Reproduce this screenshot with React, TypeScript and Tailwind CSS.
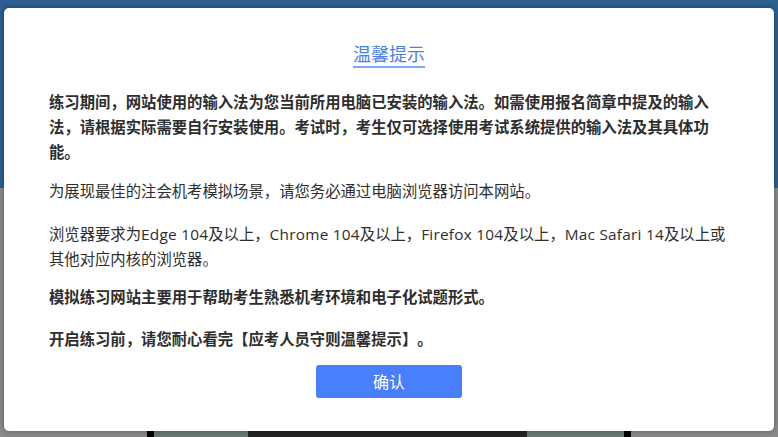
import React from "react";

const font = {
  fontFamily: '"Open Sans", "Noto Sans CJK SC", sans-serif',
};

function Latin({ children }: { children: React.ReactNode }) {
  return <span className="tracking-[0.25px]">{children}</span>;
}

export default function App() {
  return (
    <div className="relative h-[437px] w-[778px] overflow-hidden bg-[#898989]" style={font}>
      {/* page behind the overlay */}
      <div className="flex h-full flex-col">
        <div className="h-[188px] bg-[#2c5e92]" />
        <div className="flex-1 bg-[#898989]" />
        <div className="flex h-[6px] pl-[147px]">
          <div className="w-[7px] bg-black" />
          <div className="w-[94px] bg-[#6a7876]" />
          <div className="w-[279px] bg-[#252525]" />
          <div className="w-[97px] bg-[#6a7876]" />
          <div className="w-[7px] bg-black" />
        </div>
      </div>

      {/* dialog */}
      <div className="absolute left-[4px] top-[8px] flex h-[423px] w-[770px] flex-col items-center rounded-[5px] bg-white pt-[34px] shadow-[0_0_5px_rgba(0,0,0,0.35)] [text-spacing-trim:space-all]">
        <h2 className="border-b-2 border-[#7ea8f6] text-[18px] leading-[24px] text-[#4a7fe6]">
          温馨提示
        </h2>

        <div className="mt-[22px] w-[680px] text-[15.35px] leading-[25px] text-[#2e2e2e]">
          <p className="font-bold">
            练习期间，网站使用的输入法为您当前所用电脑已安装的输入法。如需使用报名简章中提及的输入法，请根据实际需要自行安装使用。考试时，考生仅可选择使用考试系统提供的输入法及其具体功能。
          </p>
          <p className="mt-[14px]">为展现最佳的注会机考模拟场景，请您务必通过电脑浏览器访问本网站。</p>
          <p className="mt-[18px]">
            浏览器要求为<Latin>Edge 104</Latin>及以上，<Latin>Chrome 104</Latin>及以上，<Latin>Firefox 104</Latin>及以上，
            <Latin>Mac Safari 14</Latin>及以上或其他对应内核的浏览器。
          </p>
          <p className="mt-[13px] font-bold">模拟练习网站主要用于帮助考生熟悉机考环境和电子化试题形式。</p>
          <p className="mt-[17px] font-bold">开启练习前，请您耐心看完【应考人员守则温馨提示】。</p>
        </div>

        <button className="mt-[13px] h-[33px] w-[146px] rounded-[3px] bg-[#477ffd] text-[16px] text-white">
          确认
        </button>
      </div>
    </div>
  );
}
